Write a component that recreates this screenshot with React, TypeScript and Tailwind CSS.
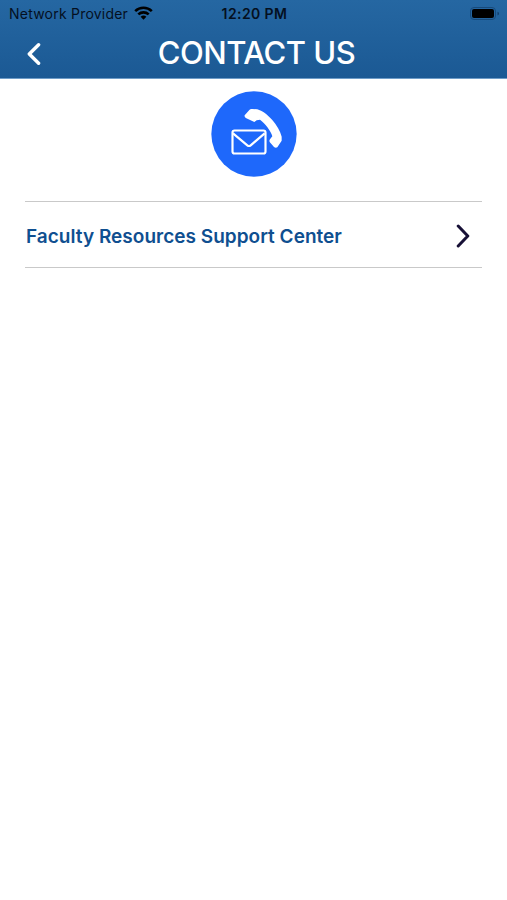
function StatusBar() {
  return (
    <div className="grid h-[27px] grid-cols-3 items-center pl-[9px] pr-[7px] text-[#04101f]">
      <div className="flex items-center gap-[6px]">
        <span className="whitespace-nowrap text-[14px] tracking-[0.22px]">Network Provider</span>
        <svg className="-mt-px h-[14px] w-[19px] shrink-0" viewBox="0 0 19 14" fill="none" stroke="#000" strokeWidth="2.6">
          <path d="M1.2 5.1a12 12 0 0 1 16.6 0" />
          <path d="M4.3 8.4a7.6 7.6 0 0 1 10.4 0" />
          <path d="M9.5 13.8 6.6 10.8a4.2 4.2 0 0 1 5.8 0z" fill="#000" stroke="none" />
        </svg>
      </div>
      <span className="text-center text-[14px] font-semibold tracking-[0.4px]">12:20 PM</span>
      <svg className="h-[14px] w-[30px] justify-self-end" viewBox="0 0 30 14">
        <rect x="0.5" y="0.5" width="25" height="12" rx="3.5" fill="none" stroke="#174a7b" />
        <rect x="2" y="2" width="22" height="9" rx="2" fill="#000" />
        <path d="M27.5 4.8c2 .4 2 3.2 0 3.6z" fill="#123f6c" />
      </svg>
    </div>
  );
}

function Header() {
  return (
    <header className="h-[79px] border-b border-[#6e9cc8] bg-linear-to-b from-[#2567a2] to-[#1b5994]">
      <StatusBar />
      <div className="grid h-[49px] grid-cols-[60px_1fr_60px] items-center">
        <button className="pl-[27px]" aria-label="Back">
          <svg className="mt-[4px] h-6 w-[14px]" viewBox="0 0 14 24" fill="none" stroke="#fff" strokeWidth="3.4" strokeLinecap="round" strokeLinejoin="round">
            <path d="M11.6 2.7 2.3 12l9.3 9.3" />
          </svg>
        </button>
        <h1 className="whitespace-nowrap pl-[6px] pt-[2px] text-center text-[31px] font-medium leading-none tracking-[-0.5px] text-white">
          CONTACT US
        </h1>
      </div>
    </header>
  );
}

function ContactIcon() {
  return (
    <svg className="size-[86px]" viewBox="0 0 258 258">
      <circle cx="129" cy="129" r="128" fill="#1e68fb" />
      {/* Handset */}
      <path
        d="M101 73 115 57Q118 53 124 54L139 55C168 63 204 104 212 137V149L199 169Q194 172 189 168L176 153Q174 148 177 145L184 136C180 120 161 96 147 86L137 88 130 93 106 82Q99 78 101 73Z"
        fill="#fff"
      />
      {/* Envelope */}
      <g fill="none" stroke="#fff" strokeWidth="6.5" strokeLinejoin="round">
        <rect x="64.5" y="118.5" width="99" height="69" rx="6" />
        <path d="m66 127 43 36q5 4 10 0l42-36" />
      </g>
    </svg>
  );
}

export default function App() {
  return (
    <div className="min-h-screen bg-white font-['Inter','Liberation_Sans',sans-serif]">
      <Header />
      <main className="px-[25px] pt-3">
        <div className="flex justify-center">
          <ContactIcon />
        </div>
        <button className="mt-6 flex h-[67px] w-full items-center justify-between border-y border-[#c9c9c9] pl-px pr-[12px] text-left">
          <span className="whitespace-nowrap pt-[5px] text-[19px] font-semibold tracking-[0.02px] text-[#0f4f90]">
            Faculty Resources Support Center
          </span>
          <svg className="mt-[3px] h-6 w-[14px]" viewBox="0 0 14 24" fill="none" stroke="#171036" strokeWidth="3" strokeLinecap="round" strokeLinejoin="round">
            <path d="m2.2 2 9.6 10-9.6 10" />
          </svg>
        </button>
      </main>
    </div>
  );
}
